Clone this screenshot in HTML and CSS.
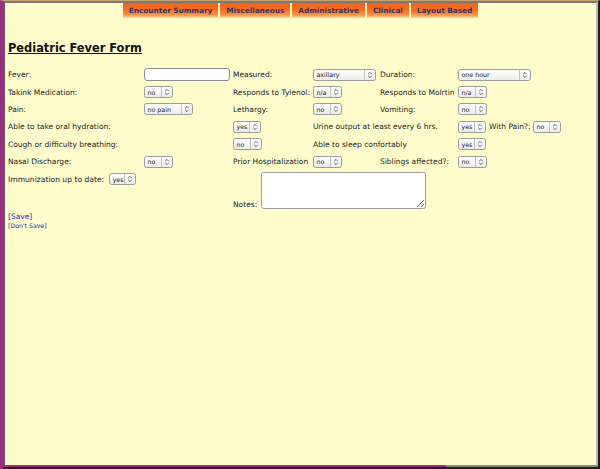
FILE: index.html
```html
<!DOCTYPE html>
<html>
<head>
<meta charset="utf-8">
<link rel="stylesheet" href="styles.css">
</head>
<body>
<div class="window">
  <div class="client">
    <nav class="tabs">
      <a class="tab">Encounter Summary</a>
      <a class="tab">Miscellaneous</a>
      <a class="tab">Administrative</a>
      <a class="tab">Clinical</a>
      <a class="tab">Layout Based</a>
    </nav>
    <main class="page">
      <h1 class="title">Pediatric Fever Form</h1>
      <form class="form">
        <span class="lbl">Fever:</span>
        <span class="cell"><input class="text" type="text"></span>
        <span class="lbl">Measured:</span>
        <span class="cell"><span class="sel w63"><span class="opt">axillary</span><span class="arr"><svg viewBox="0 0 6 8" width="6" height="8"><path d="M1.2 3.2 L3 1.4 L4.8 3.2 M1.2 4.8 L3 6.6 L4.8 4.8"/></svg></span></span></span>
        <span class="lbl">Duration:</span>
        <span class="cell span3"><span class="sel w73"><span class="opt">one hour</span><span class="arr"><svg viewBox="0 0 6 8" width="6" height="8"><path d="M1.2 3.2 L3 1.4 L4.8 3.2 M1.2 4.8 L3 6.6 L4.8 4.8"/></svg></span></span></span>

        <span class="lbl">Takink Medication:</span>
        <span class="cell"><span class="sel w29"><span class="opt">no</span><span class="arr"><svg viewBox="0 0 6 8" width="6" height="8"><path d="M1.2 3.2 L3 1.4 L4.8 3.2 M1.2 4.8 L3 6.6 L4.8 4.8"/></svg></span></span></span>
        <span class="lbl">Responds to Tylenol:</span>
        <span class="cell"><span class="sel w29"><span class="opt">n/a</span><span class="arr"><svg viewBox="0 0 6 8" width="6" height="8"><path d="M1.2 3.2 L3 1.4 L4.8 3.2 M1.2 4.8 L3 6.6 L4.8 4.8"/></svg></span></span></span>
        <span class="lbl">Responds to Molrtin</span>
        <span class="cell span3"><span class="sel w29"><span class="opt">n/a</span><span class="arr"><svg viewBox="0 0 6 8" width="6" height="8"><path d="M1.2 3.2 L3 1.4 L4.8 3.2 M1.2 4.8 L3 6.6 L4.8 4.8"/></svg></span></span></span>

        <span class="lbl">Pain:</span>
        <span class="cell"><span class="sel w49"><span class="opt">no pain</span><span class="arr"><svg viewBox="0 0 6 8" width="6" height="8"><path d="M1.2 3.2 L3 1.4 L4.8 3.2 M1.2 4.8 L3 6.6 L4.8 4.8"/></svg></span></span></span>
        <span class="lbl">Lethargy:</span>
        <span class="cell"><span class="sel w29"><span class="opt">no</span><span class="arr"><svg viewBox="0 0 6 8" width="6" height="8"><path d="M1.2 3.2 L3 1.4 L4.8 3.2 M1.2 4.8 L3 6.6 L4.8 4.8"/></svg></span></span></span>
        <span class="lbl">Vomiting:</span>
        <span class="cell span3"><span class="sel w29"><span class="opt">no</span><span class="arr"><svg viewBox="0 0 6 8" width="6" height="8"><path d="M1.2 3.2 L3 1.4 L4.8 3.2 M1.2 4.8 L3 6.6 L4.8 4.8"/></svg></span></span></span>

        <span class="lbl span2">Able to take oral hydration:</span>
        <span class="cell"><span class="sel w28"><span class="opt">yes</span><span class="arr"><svg viewBox="0 0 6 8" width="6" height="8"><path d="M1.2 3.2 L3 1.4 L4.8 3.2 M1.2 4.8 L3 6.6 L4.8 4.8"/></svg></span></span></span>
        <span class="lbl span2">Urine output at least every 6 hrs.</span>
        <span class="cell"><span class="sel w28"><span class="opt">yes</span><span class="arr"><svg viewBox="0 0 6 8" width="6" height="8"><path d="M1.2 3.2 L3 1.4 L4.8 3.2 M1.2 4.8 L3 6.6 L4.8 4.8"/></svg></span></span></span>
        <span class="lbl">With Pain?:</span>
        <span class="cell"><span class="sel w28"><span class="opt">no</span><span class="arr"><svg viewBox="0 0 6 8" width="6" height="8"><path d="M1.2 3.2 L3 1.4 L4.8 3.2 M1.2 4.8 L3 6.6 L4.8 4.8"/></svg></span></span></span>

        <span class="lbl span2">Cough or difficulty breathing:</span>
        <span class="cell"><span class="sel w29"><span class="opt">no</span><span class="arr"><svg viewBox="0 0 6 8" width="6" height="8"><path d="M1.2 3.2 L3 1.4 L4.8 3.2 M1.2 4.8 L3 6.6 L4.8 4.8"/></svg></span></span></span>
        <span class="lbl span2">Able to sleep confortably</span>
        <span class="cell span3"><span class="sel w28"><span class="opt">yes</span><span class="arr"><svg viewBox="0 0 6 8" width="6" height="8"><path d="M1.2 3.2 L3 1.4 L4.8 3.2 M1.2 4.8 L3 6.6 L4.8 4.8"/></svg></span></span></span>

        <span class="lbl">Nasal Discharge:</span>
        <span class="cell"><span class="sel w29"><span class="opt">no</span><span class="arr"><svg viewBox="0 0 6 8" width="6" height="8"><path d="M1.2 3.2 L3 1.4 L4.8 3.2 M1.2 4.8 L3 6.6 L4.8 4.8"/></svg></span></span></span>
        <span class="lbl">Prior Hospitalization</span>
        <span class="cell"><span class="sel w29"><span class="opt">no</span><span class="arr"><svg viewBox="0 0 6 8" width="6" height="8"><path d="M1.2 3.2 L3 1.4 L4.8 3.2 M1.2 4.8 L3 6.6 L4.8 4.8"/></svg></span></span></span>
        <span class="lbl">Siblings affected?:</span>
        <span class="cell span3"><span class="sel w29"><span class="opt">no</span><span class="arr"><svg viewBox="0 0 6 8" width="6" height="8"><path d="M1.2 3.2 L3 1.4 L4.8 3.2 M1.2 4.8 L3 6.6 L4.8 4.8"/></svg></span></span></span>

        <span class="immun span2"><span class="lbl">Immunization up to date:</span><span class="sel w27"><span class="opt">yes</span><span class="arr"><svg viewBox="0 0 6 8" width="6" height="8"><path d="M1.2 3.2 L3 1.4 L4.8 3.2 M1.2 4.8 L3 6.6 L4.8 4.8"/></svg></span></span></span>
        <span class="notes-cell"><span class="lbl">Notes:</span><textarea class="notes"></textarea></span>
      </form>
      <div class="actions">
        <a class="save" href="#">[Save]</a>
        <a class="dont" href="#">[Don't Save]</a>
      </div>
    </main>
  </div>
  <div class="bottom-edge"></div>
</div>
</body>
</html>
```

FILE: styles.css
```css
html, body {
  margin: 0;
  padding: 0;
  background: #222;
}

body {
  font-family: "DejaVu Sans", Verdana, sans-serif;
  color: #222;
}

.window {
  width: 600px;
  height: 469px;
  box-sizing: border-box;
  display: flex;
  flex-direction: column;
  border-top: 1px solid #c9a36a;
  border-left: 3px solid #9a2f80;
  border-right: 2px solid #1e1e1e;
  background: #222;
}

.client {
  flex: 1;
  display: flex;
  flex-direction: column;
  background: #fffccc;
  border-top: 2px solid #7a7a7a;
  border-left: 2px solid #5a5a5a;
  border-right: 2px solid #b8b8b8;
  min-height: 0;
}

.bottom-edge {
  height: 4px;
  background:
    linear-gradient(#9a2f80, #9a2f80) 0 0 / 443px 2px no-repeat,
    linear-gradient(#8a8a8a, #8a8a8a) 0 0 / 100% 2px no-repeat,
    #1e1e1e;
}

/* tabs */
.tabs {
  display: flex;
  justify-content: center;
  gap: 2px;
  height: 15px;
}

.tab {
  display: flex;
  align-items: center;
  padding: 0 6px;
  font-size: 7.3px;
  font-weight: bold;
  color: #1f3a6b;
  background: linear-gradient(#e96420 0%, #ff6b1c 45%, #ff8a3c 75%, #ffd9a6 100%);
}

/* page */
.page {
  padding: 0 3px;
}

.title {
  margin: 23px 0 0;
  font-size: 11.4px;
  line-height: 15px;
  font-weight: bold;
  text-decoration: underline;
  color: #111;
}

.form {
  display: grid;
  grid-template-columns: 136px 89px 80px 67px 78px 31px 44px 1fr;
  grid-template-rows: repeat(6, 17.4px) auto;
  align-items: center;
  margin-top: 10px;
}

.lbl {
  font-size: 7.5px;
  line-height: 9px;
  white-space: nowrap;
}

.span2 { grid-column: span 2; }
.span3 { grid-column: span 3; }

.cell {
  display: flex;
  align-items: center;
}

.text {
  box-sizing: border-box;
  width: 86px;
  height: 13px;
  margin: 0;
  padding: 0 3px;
  border: 1px solid #8f8f8f;
  border-radius: 3px;
  background: #fff;
  font-size: 6.6px;
}

.sel {
  box-sizing: border-box;
  display: inline-flex;
  align-items: stretch;
  height: 12px;
  border: 1px solid #9d9d9d;
  border-radius: 2.5px;
  background: linear-gradient(#ffffff, #ececec);
  font-size: 6.3px;
  color: #222;
}

.opt {
  flex: 1;
  min-width: 0;
  overflow: hidden;
  display: flex;
  align-items: center;
  padding-left: 2.5px;
  white-space: nowrap;
}

.arr {
  flex: none;
  width: 10px;
  display: flex;
  align-items: center;
  justify-content: center;
  border-left: 1px solid #c4c4c4;
}

.arr svg {
  display: block;
}

.arr path {
  fill: none;
  stroke: #555;
  stroke-width: 0.9;
}

.w27 { width: 27px; }
.w28 { width: 28px; }
.w29 { width: 29px; }
.w49 { width: 49px; }
.w63 { width: 63px; }
.w73 { width: 73px; }

.immun {
  align-self: start;
  height: 17.4px;
  display: flex;
  align-items: center;
  gap: 5px;
}

.immun .lbl {
  font-size: 7.6px;
}

.notes-cell {
  grid-column: 3 / span 5;
  display: flex;
  align-items: flex-end;
  gap: 3px;
  padding-top: 2px;
  padding-bottom: 2px;
}

.notes {
  box-sizing: border-box;
  width: 165px;
  height: 37px;
  margin: 0 0 0 1px;
  border: 1px solid #9d9d9d;
  border-radius: 2.5px;
  background: #fff;
  display: block;
}

.actions {
  display: flex;
  flex-direction: column;
  align-items: flex-start;
}

.save, .dont {
  color: #2c2cb0;
  text-decoration: none;
}

.save {
  font-size: 7.5px;
  line-height: 10px;
  margin-top: 1px;
}

.dont {
  font-size: 6.2px;
  line-height: 8px;
}
```
